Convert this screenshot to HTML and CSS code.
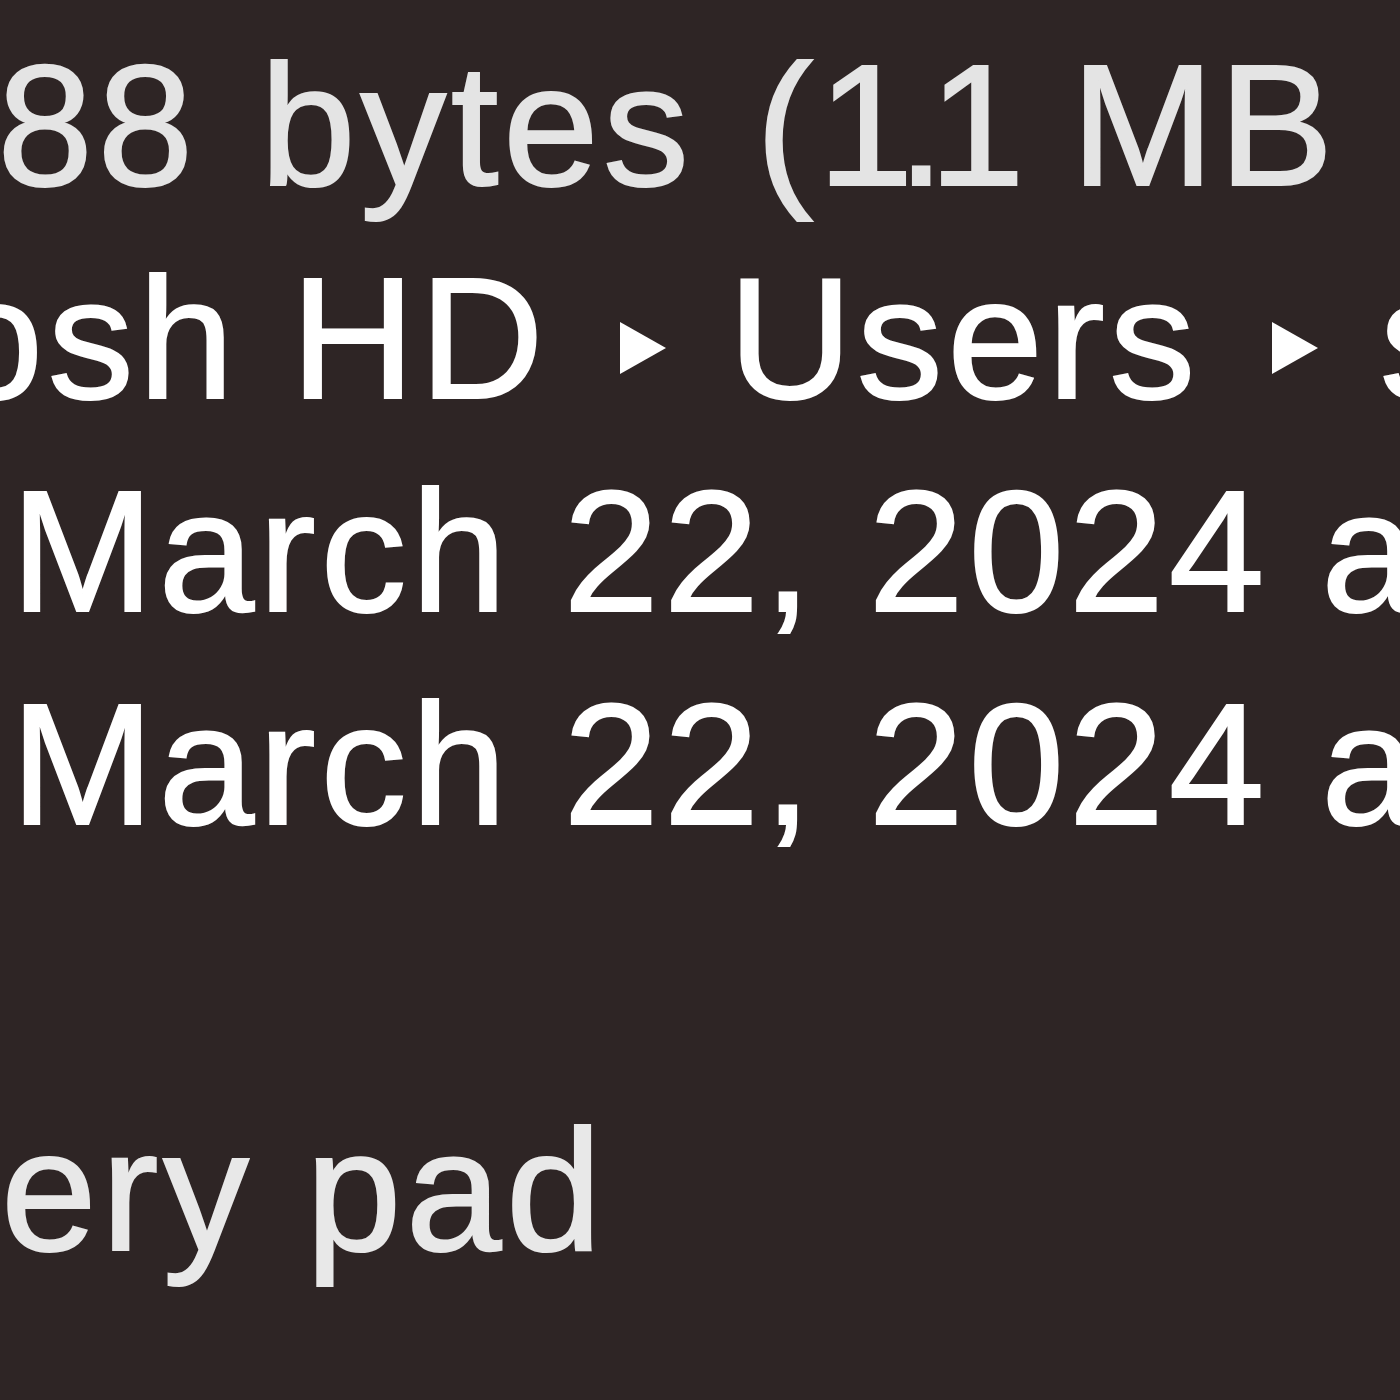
FILE: index.html
```html
<!DOCTYPE html>
<html lang="en">
<head>
  <meta charset="UTF-8">
  <title>Get Info</title>
  <link rel="stylesheet" href="styles.css">
</head>
<body>

  <div class="info-panel">
    <div class="row size">1,091,088 bytes (<span class="tight">1.1</span> MB on disk)</div>
    <div class="row where">Macintosh HD<svg class="crumb" viewBox="0 0 50 56"><path d="M2 2 L48 28 L2 54 Z"/></svg>Users<svg class="crumb" viewBox="0 0 50 56"><path d="M2 2 L48 28 L2 54 Z"/></svg>shared</div>
    <div class="row">Friday, March 22, 2024 at 10:41 AM</div>
    <div class="row">Friday, March 22, 2024 at 10:41 AM</div>
    <div class="row blank"></div>
    <div class="row option">Stationery pad</div>
  </div>

</body>
</html>
```

FILE: styles.css
```css
html, body {
  margin: 0;
  height: 100%;
}

body {
  background-color: #2e2525;
  font-family: 'Liberation Sans', Arial, sans-serif;
  color: #ffffff;
  overflow: hidden;
  padding-top: 19px;
  box-sizing: border-box;
}

.info-panel {
  margin-left: -586px;
  font-size: 172px;
  line-height: 213px;
  letter-spacing: 4.5px;
  -webkit-text-stroke: 2px currentColor;
}

.row {
  white-space: nowrap;
  height: 213px;
}

.size {
  color: #e4e4e4;
  margin-left: -22px;
  word-spacing: 10px;
}

.tight {
  letter-spacing: -16px;
}

.crumb {
  width: 50px;
  height: 56px;
  margin: 0 60px 0 70px;
  fill: #ffffff;
  vertical-align: 22px;
}

.option {
  color: #e8e8e8;
  margin-left: 20px;
}
```
